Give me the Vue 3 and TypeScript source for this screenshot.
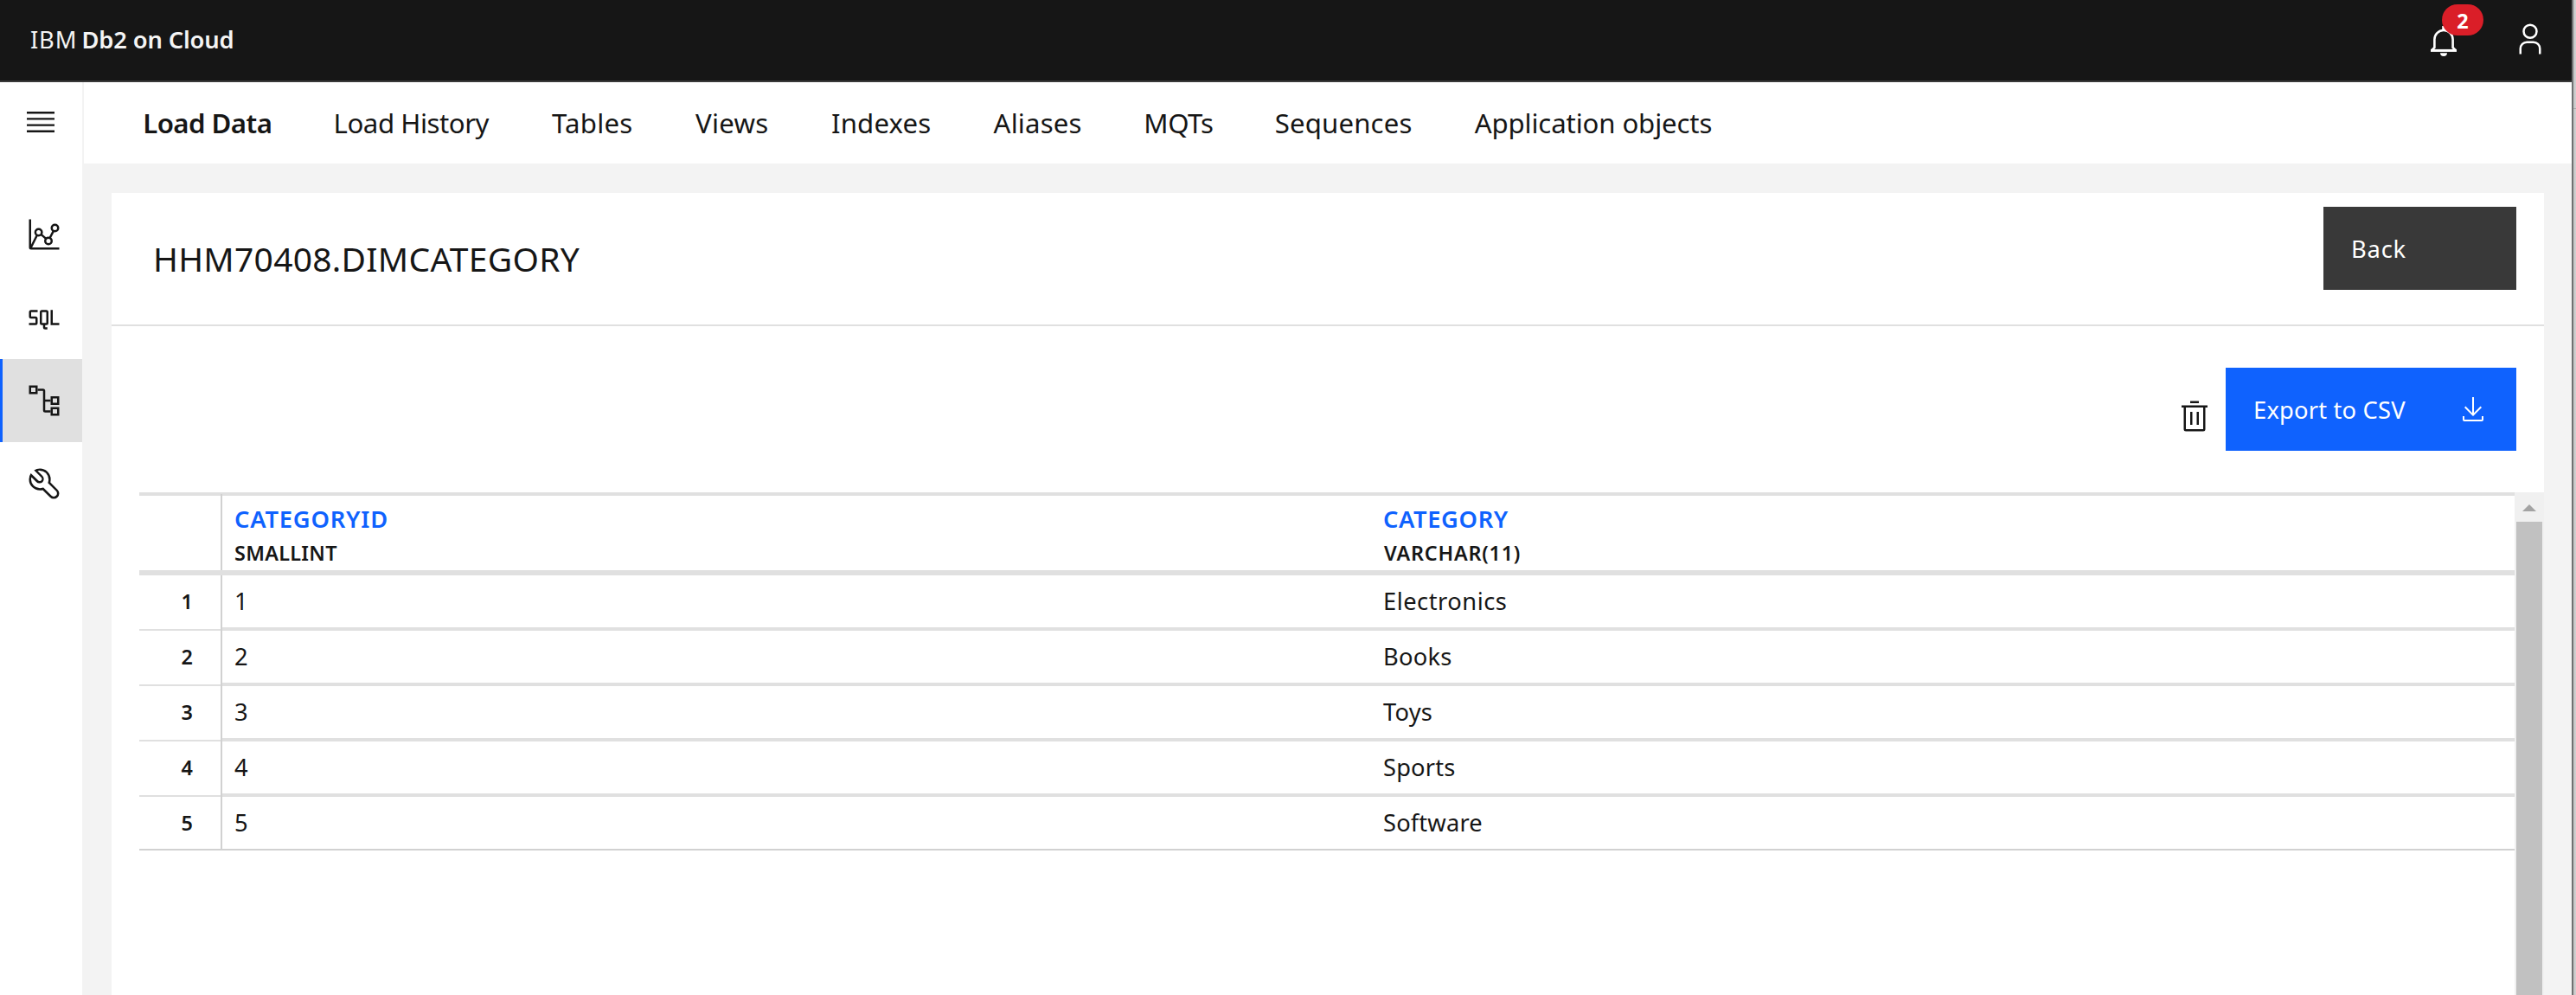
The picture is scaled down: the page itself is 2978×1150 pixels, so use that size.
<script setup lang="ts">
interface Tab { label: string; width: number; tracking: number; active?: boolean }
interface Row { id: string; category: string; tracking: number }

const tabs: Tab[] = [
  { label: 'Load Data', width: 148.4, tracking: -0.55, active: true },
  { label: 'Load History', width: 180.4, tracking: -0.46 },
  { label: 'Tables', width: 94, tracking: 0.23 },
  { label: 'Views', width: 85, tracking: 0.27 },
  { label: 'Indexes', width: 115.6, tracking: 0.14 },
  { label: 'Aliases', width: 101.8, tracking: 0.16 },
  { label: 'MQTs', width: 79.5, tracking: -0.48 },
  { label: 'Sequences', width: 158.8, tracking: 0.12 },
  { label: 'Application objects', width: 280, tracking: -0.14 },
]

const rows: Row[] = [
  { id: '1', category: 'Electronics', tracking: 0.5 },
  { id: '2', category: 'Books', tracking: 0.25 },
  { id: '3', category: 'Toys', tracking: 0.2 },
  { id: '4', category: 'Sports', tracking: 0.15 },
  { id: '5', category: 'Software', tracking: 0.15 },
]
</script>

<template>
  <div class="window">
    <div class="app">
      <header class="topbar">
        <div class="brand"><span class="vendor">IBM</span><strong>Db2 on Cloud</strong></div>
        <div class="actions">
          <div class="bell">
            <svg width="40" height="40" viewBox="0 0 40 40" fill="none" stroke="#fff" stroke-width="2.6">
              <path d="M20 3v5" stroke-width="3.6" />
              <path d="M6.2 31.2L9.4 28V18.6a10.6 10.6 0 0 1 21.2 0V28l3.2 3.2" />
              <path d="M5 31.4h30" stroke-width="3" />
              <path d="M16 34.3h8a4 3.7 0 0 1-8 0z" fill="#fff" stroke="none" />
            </svg>
            <span class="badge">2</span>
          </div>
          <svg class="user" width="40" height="40" viewBox="0 0 32 32" fill="#fff">
            <path d="M16 4a5 5 0 1 1-5 5 5 5 0 0 1 5-5m0-2a7 7 0 1 0 7 7A7 7 0 0 0 16 2zM26 30H24V25a5 5 0 0 0-5-5H13a5 5 0 0 0-5 5v5H6V25a7 7 0 0 1 7-7h6a7 7 0 0 1 7 7z" />
          </svg>
        </div>
      </header>

      <div class="body">
        <aside class="sidebar">
          <div class="menu">
            <svg width="40" height="40" viewBox="0 0 20 20" fill="#161616">
              <path d="M2 4h16v1.2H2zM2 7.6h16v1.2H2zM2 11.2h16v1.2H2zM2 14.8h16V16H2z" />
            </svg>
          </div>
          <div class="side-item">
            <svg width="40" height="40" viewBox="0 0 32 32" fill="none" stroke="#161616" stroke-width="2">
              <path d="M3 2v26a1 1 0 0 0 1 1h26" />
              <path d="M3.6 28.4L9.5 16.6M13.1 15.9l4.7 4M21.3 19.2l3.4-6.5" />
              <circle cx="10.9" cy="14" r="3" /><circle cx="20" cy="22" r="3" /><circle cx="26" cy="10" r="3" />
            </svg>
          </div>
          <div class="side-item">
            <svg width="40" height="40" viewBox="0 0 32 32" fill="#161616">
              <path d="M24 21V9H22V23h8V21zM18 9H14a2 2 0 0 0-2 2V21a2 2 0 0 0 2 2h1v2a2 2 0 0 0 2 2h2V25H17V23h1a2 2 0 0 0 2-2V11A2 2 0 0 0 18 9zM14 21V11h4V21zM8 23H2V21H8V17H4a2 2 0 0 1-2-2V11A2 2 0 0 1 4 9h6v2H4v4H8a2 2 0 0 1 2 2v4A2 2 0 0 1 8 23z" />
            </svg>
          </div>
          <div class="side-item active">
            <svg width="40" height="40" viewBox="0 0 32 32" fill="none" stroke="#161616" stroke-width="2">
              <path d="M3 3h6v6H3zM23 13h6v6h-6zM23 23h6v6h-6z" />
              <path d="M10 6h5a1 1 0 0 1 1 1v18a1 1 0 0 0 1 1h5M16 16h6" />
            </svg>
          </div>
          <div class="side-item">
            <svg width="40" height="40" viewBox="0 0 32 32" fill="#161616">
              <path d="M12.1 2a9.8 9.8 0 0 0-5.4 1.6l6.4 6.4a2.1 2.1 0 0 1 .2 3 2.1 2.1 0 0 1-3-.2L3.7 6.4A9.84 9.84 0 0 0 2 12.1 10.14 10.14 0 0 0 12.1 22.2a10.9 10.9 0 0 0 2.6-.3l6.7 6.7a5 5 0 0 0 7.1-7.1l-6.7-6.7a10.9 10.9 0 0 0 .3-2.6A10 10 0 0 0 12.1 2zm8 10.1a7.61 7.61 0 0 1-.3 2.1l-.3 1.1.8.8 6.7 6.7a2.88 2.88 0 0 1 .9 2.1A2.72 2.72 0 0 1 27 27a2.9 2.9 0 0 1-4.2 0l-6.7-6.7-.8-.8-1.1.3a7.61 7.61 0 0 1-2.1.3 8.27 8.27 0 0 1-5.7-2.3A7.63 7.63 0 0 1 4 12.1a8.33 8.33 0 0 1 .3-2.2l4.4 4.4a4.14 4.14 0 0 0 5.9.2 4.14 4.14 0 0 0-.2-5.9L10 4.2a6.45 6.45 0 0 1 2-.3 8.27 8.27 0 0 1 5.7 2.3A8.49 8.49 0 0 1 20.1 12.1z" />
            </svg>
          </div>
        </aside>

        <main class="main">
          <nav class="tabs">
            <a
              v-for="tab in tabs"
              :key="tab.label"
              class="tab"
              :class="{ current: tab.active }"
              :style="{ width: tab.width + 'px', letterSpacing: tab.tracking + 'px' }"
            >{{ tab.label }}</a>
          </nav>

          <section class="card">
            <div class="card-head">
              <h1>HHM70408.DIMCATEGORY</h1>
              <button class="btn back">Back</button>
            </div>

            <div class="toolbar">
              <svg class="trash" width="40" height="40" viewBox="0 0 32 32" fill="#161616">
                <path d="M12 12h2v12h-2zM18 12h2v12h-2zM12 2h8v2h-8z" />
                <path d="M4 6V8H6V28a2 2 0 0 0 2 2H24a2 2 0 0 0 2-2V8h2V6zM8 28V8H24V28z" />
              </svg>
              <button class="btn export">
                Export to CSV
                <svg width="32" height="32" viewBox="0 0 16 16" fill="#fff">
                  <path d="M13 7L12.3 6.3 8.5 10.1V1H7.5V10.1L3.7 6.3 3 7 8 12z" />
                  <path d="M13 12v2H3v-2H2v2c0 .6.4 1 1 1h10c.6 0 1-.4 1-1v-2z" />
                </svg>
              </button>
            </div>

            <div class="viewport">
              <div class="grid">
                <div class="grid-head">
                  <div class="num"></div>
                  <div class="col id">
                    <span class="name id-name">CATEGORYID</span>
                    <span class="type id-type">SMALLINT</span>
                  </div>
                  <div class="col">
                    <span class="name cat-name">CATEGORY</span>
                    <span class="type cat-type">VARCHAR(11)</span>
                  </div>
                </div>
                <div v-for="row in rows" :key="row.id" class="grid-row">
                  <div class="num">{{ row.id }}</div>
                  <div class="cell id">{{ row.id }}</div>
                  <div class="cell" :style="{ letterSpacing: row.tracking + 'px' }">{{ row.category }}</div>
                </div>
              </div>
              <div class="scrollbar">
                <svg width="16" height="8" viewBox="0 0 16 8" fill="#a3a3a3"><path d="M0 8L8 0l8 8z" /></svg>
                <div class="thumb"></div>
              </div>
            </div>
          </section>
        </main>
      </div>
    </div>
    <div class="edge"><i></i></div>
  </div>
</template>

<style>
body {
  overflow: hidden;
}
</style>

<style scoped>
* {
  box-sizing: border-box;
}
.window {
  display: flex;
  width: 2978px;
  height: 1150px;
  overflow: hidden;
  color: #161616;
  font-family: "Noto Sans", "Open Sans", sans-serif;
}
svg {
  display: block;
  flex: none;
}
.app {
  width: 2973px;
  display: flex;
  flex-direction: column;
}
.edge {
  width: 5px;
  border-left: 2px solid #6f7171;
  background: linear-gradient(90deg, #c2c2c2, #d2d2d2);
  padding-top: 125px;
}
.edge i {
  display: block;
  height: 1px;
  background: #a9a9a9;
}
.topbar {
  flex: none;
  height: 95px;
  display: flex;
  justify-content: space-between;
  background: #161616;
  border-bottom: 2px solid #393939;
  color: #f4f4f4;
}
.brand {
  display: flex;
  padding-left: 35px;
  font-size: 27.3px;
  line-height: 91px;
}
.vendor {
  width: 59.4px;
  letter-spacing: 0.84px;
}
.brand strong {
  font-weight: 600;
  letter-spacing: -0.12px;
}
.actions {
  display: flex;
  padding: 25px 28px 0 0;
  gap: 60px;
}
.bell {
  position: relative;
  padding-top: 2px;
}
.badge {
  position: absolute;
  left: 18px;
  top: -20px;
  width: 48px;
  height: 36px;
  border-radius: 18px;
  background: #da1e28;
  color: #fff;
  font-size: 23.4px;
  font-weight: 700;
  line-height: 38px;
  text-align: center;
}
.body {
  flex: 1;
  min-height: 0;
  display: flex;
}
.sidebar {
  flex: none;
  width: 97px;
  border-right: 2px solid #f3f3f3;
  background: #fff;
}
.menu {
  height: 128px;
  padding: 26px 0 0 27px;
}
.side-item {
  height: 96px;
  padding: 28px 0 0 31px;
}
.side-item.active {
  padding-left: 28px;
  border-left: 3px solid #0f62fe;
  background: #e0e0e0;
}
.main {
  flex: 1;
  min-width: 0;
  display: flex;
  flex-direction: column;
  background: #f3f3f3;
}
.tabs {
  flex: none;
  display: flex;
  gap: 72px;
  height: 94px;
  padding-left: 68.2px;
  background: #fff;
  font-size: 31.2px;
  line-height: 94px;
  white-space: nowrap;
}
.tab {
  flex: none;
}
.tab.current {
  font-weight: 600;
}
.card {
  flex: 1;
  min-height: 0;
  display: flex;
  flex-direction: column;
  margin: 34px 32px 0;
  background: #fff;
}
.card-head {
  flex: none;
  height: 154px;
  display: flex;
  justify-content: space-between;
  padding: 0 32px 0 48px;
  border-bottom: 2px solid #e0e0e0;
}
h1 {
  margin: 0;
  font-size: 39px;
  font-weight: 400;
  line-height: 152px;
  letter-spacing: 0.27px;
}
.btn {
  display: flex;
  align-items: center;
  justify-content: space-between;
  height: 96px;
  border: 0;
  padding: 0 34px 0 32px;
  color: #fff;
  font-family: inherit;
  font-size: 27.3px;
}
.back {
  width: 223px;
  margin-top: 16px;
  background: #393939;
  letter-spacing: 0.8px;
}
.export {
  width: 336px;
  background: #0f62fe;
  letter-spacing: 0.2px;
}
.toolbar {
  flex: none;
  height: 192px;
  display: flex;
  justify-content: flex-end;
  gap: 16px;
  padding: 48px 32px 0 0;
}
.trash {
  margin-top: 36px;
}
.viewport {
  flex: 1;
  min-height: 0;
  display: flex;
  padding-left: 32px;
}
.grid {
  flex: 1;
  border-top: 4px solid #e0e0e0;
}
.grid-head,
.grid-row {
  display: flex;
}
.grid-head {
  height: 92px;
  border-bottom: 6px solid #e0e0e0;
}
.grid-head .num {
  position: relative;
}
.grid-head .num::after {
  content: "";
  position: absolute;
  top: -2px;
  right: -2px;
  width: 2px;
  height: 2px;
  background: #d1d1d1;
}
.grid-row {
  height: 64px;
}
.num {
  flex: none;
  width: 96px;
  padding-right: 32px;
  border-right: 2px solid #d1d1d1;
  font-size: 23.4px;
  font-weight: 600;
  line-height: 60px;
  text-align: right;
}
.grid-row .num {
  background: linear-gradient(#e0e0e0, #e0e0e0) bottom / 100% 2px no-repeat;
}
.col {
  display: flex;
  flex-direction: column;
  flex: 1;
  padding: 7px 0 0 14px;
  font-weight: 600;
  line-height: 39px;
}
.col.id,
.cell.id {
  flex: none;
  width: 1328px;
}
.name {
  color: #0f62fe;
  font-size: 27.3px;
  line-height: 40px;
}
.type {
  font-size: 23.4px;
}
.id-name {
  letter-spacing: 0.8px;
}
.id-type {
  letter-spacing: 0.3px;
}
.cat-name {
  letter-spacing: 0.62px;
}
.cat-type {
  padding-left: 1px;
  letter-spacing: 0.75px;
}
.cell {
  flex: 1;
  padding-left: 14px;
  border-bottom: 4px solid #e0e0e0;
  font-size: 27.3px;
  line-height: 59px;
}
.grid-row:last-child {
  height: 62px;
}
.grid-row:last-child .num {
  background: linear-gradient(#d1d1d1, #d1d1d1) bottom / 100% 2px no-repeat;
}
.grid-row:last-child .cell {
  border-bottom: 2px solid #d1d1d1;
}
.scrollbar {
  flex: none;
  width: 34px;
  display: flex;
  flex-direction: column;
  align-items: center;
  padding-top: 14px;
  background: #f0f0f0;
}
.thumb {
  flex: 1;
  width: 30px;
  margin-top: 12px;
  background: #c1c1c1;
}
</style>
